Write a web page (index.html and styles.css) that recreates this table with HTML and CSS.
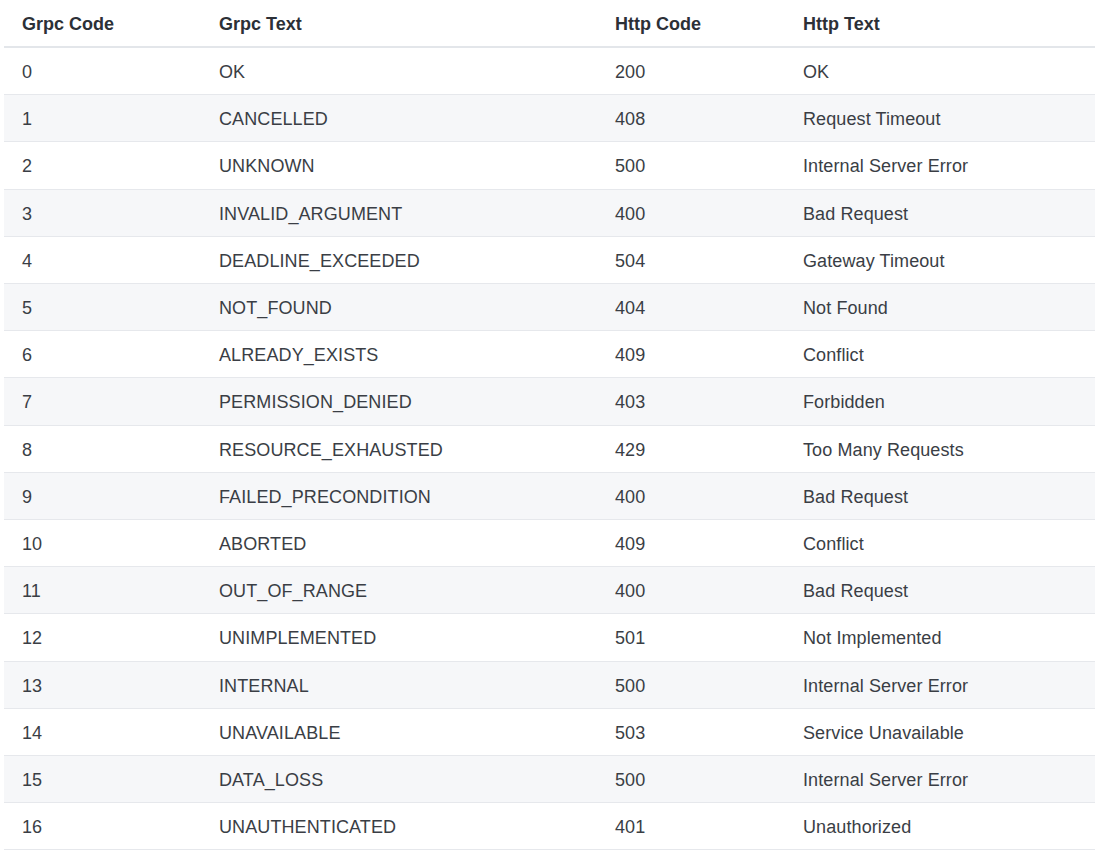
FILE: index.html
```html
<!DOCTYPE html>
<html>
<head>
<meta charset="utf-8">
<link rel="stylesheet" href="styles.css">
</head>
<body>
<div class="wrap">
<table class="codes">
<colgroup>
<col class="c1"><col class="c2"><col class="c3"><col class="c4">
</colgroup>
<thead>
<tr><th>Grpc Code</th><th>Grpc Text</th><th>Http Code</th><th>Http Text</th></tr>
</thead>
<tbody>
<tr><td>0</td><td>OK</td><td>200</td><td>OK</td></tr>
<tr><td>1</td><td>CANCELLED</td><td>408</td><td>Request Timeout</td></tr>
<tr><td>2</td><td>UNKNOWN</td><td>500</td><td>Internal Server Error</td></tr>
<tr><td>3</td><td>INVALID_ARGUMENT</td><td>400</td><td>Bad Request</td></tr>
<tr><td>4</td><td>DEADLINE_EXCEEDED</td><td>504</td><td>Gateway Timeout</td></tr>
<tr><td>5</td><td>NOT_FOUND</td><td>404</td><td>Not Found</td></tr>
<tr><td>6</td><td>ALREADY_EXISTS</td><td>409</td><td>Conflict</td></tr>
<tr><td>7</td><td>PERMISSION_DENIED</td><td>403</td><td>Forbidden</td></tr>
<tr><td>8</td><td>RESOURCE_EXHAUSTED</td><td>429</td><td>Too Many Requests</td></tr>
<tr><td>9</td><td>FAILED_PRECONDITION</td><td>400</td><td>Bad Request</td></tr>
<tr><td>10</td><td>ABORTED</td><td>409</td><td>Conflict</td></tr>
<tr><td>11</td><td>OUT_OF_RANGE</td><td>400</td><td>Bad Request</td></tr>
<tr><td>12</td><td>UNIMPLEMENTED</td><td>501</td><td>Not Implemented</td></tr>
<tr><td>13</td><td>INTERNAL</td><td>500</td><td>Internal Server Error</td></tr>
<tr><td>14</td><td>UNAVAILABLE</td><td>503</td><td>Service Unavailable</td></tr>
<tr><td>15</td><td>DATA_LOSS</td><td>500</td><td>Internal Server Error</td></tr>
<tr><td>16</td><td>UNAUTHENTICATED</td><td>401</td><td>Unauthorized</td></tr>
</tbody>
</table>
</div>
</body>
</html>
```
FILE: styles.css
```css
html, body {
  margin: 0;
  padding: 0;
  background: #ffffff;
}
.wrap {
  padding: 0 3px 0 4px;
}
.codes {
  width: 1091px;
  border-collapse: collapse;
  table-layout: fixed;
  font-family: "Liberation Sans", Arial, sans-serif;
  font-size: 18px;
  color: #3a3e45;
}
.c1 { width: 197px; }
.c2 { width: 396px; }
.c3 { width: 188px; }
.c4 { width: 310px; }
.codes th {
  text-align: left;
  font-weight: bold;
  color: #2c3037;
  padding: 12px 18px 10px;
  line-height: 24px;
  border-bottom: 2px solid #e3e6ea;
}
.codes td {
  padding: 12px 18px 10px;
  line-height: 24.2px;
  border-bottom: 1px solid #e6e8ec;
  letter-spacing: 0.1px;
}
.codes tbody tr:nth-child(even) td {
  background: #f6f7f9;
}
```
